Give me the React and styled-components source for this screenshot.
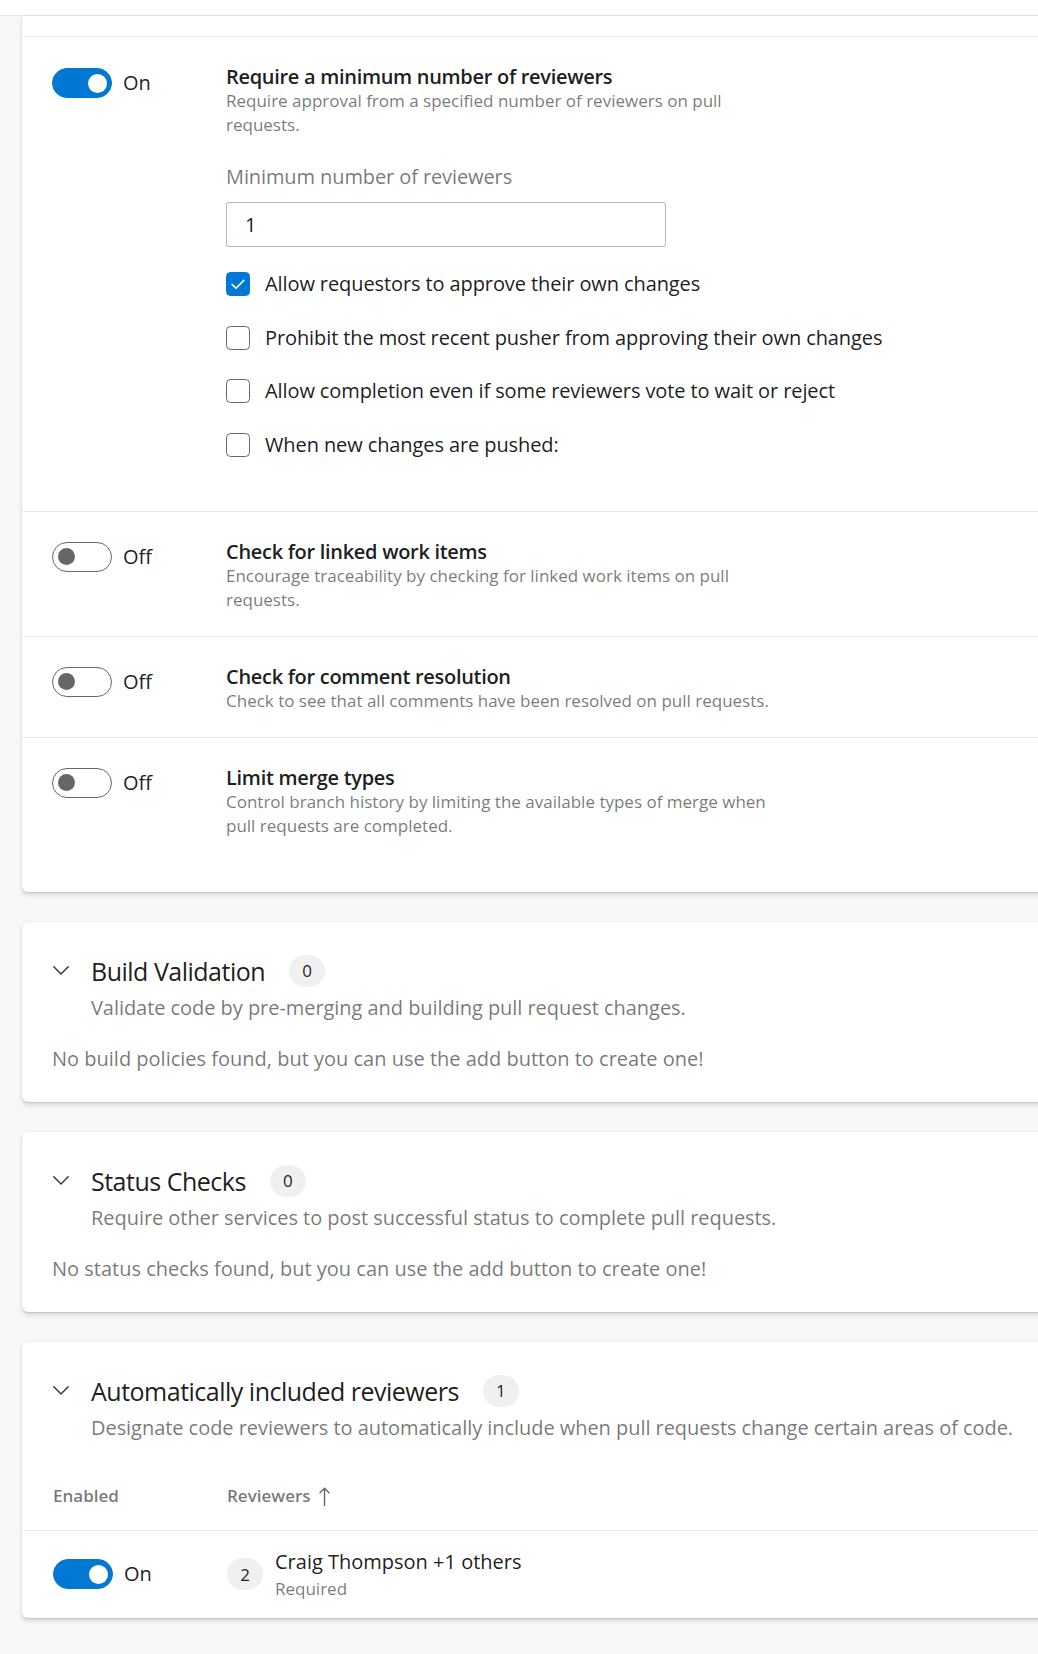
import React from "react";
import styled, { createGlobalStyle } from "styled-components";

const FONT = `"Open Sans", "Noto Sans", "Liberation Sans", sans-serif`;
const TEXT = "rgba(0, 0, 0, 0.9)";
const SUBTLE = "rgba(0, 0, 0, 0.55)";
const BLUE = "#0078d4";
const LINE = "#eaeaea";

const GlobalStyle = createGlobalStyle`
  html, body { margin: 0; padding: 0; }
  body {
    background: #f8f8f8;
    font-family: ${FONT};
    color: ${TEXT};
    overflow: hidden;
  }
  * { box-sizing: border-box; }
`;

const Page = styled.div`
  width: 1038px;
  height: 1654px;
  overflow: hidden;
`;

const TopBar = styled.header`
  height: 16px;
  background: #fff;
  border-bottom: 1px solid ${LINE};
`;

const Stack = styled.main`
  display: flex;
  flex-direction: column;
  gap: 30px;
  padding-left: 22px;
  width: 1100px;
`;

const Card = styled.section`
  background: #fff;
  border-radius: ${(p) => (p.$flushTop ? "0 0 6px 6px" : "6px")};
  box-shadow: 0 2.4px 5.4px rgba(0, 0, 0, 0.132), 0 0.45px 1.35px rgba(0, 0, 0, 0.108);
  padding: ${(p) => p.$pad || "0"};
`;

const CardLead = styled.div`
  height: 21px;
  border-bottom: 1px solid ${LINE};
`;

const PolicyRow = styled.div`
  display: grid;
  grid-template-columns: 174px 1fr;
  padding: 27px 0 24px 30px;
  border-bottom: ${(p) => (p.$last ? "none" : `1px solid ${LINE}`)};
`;

const ToggleField = styled.div`
  display: flex;
  align-items: center;
  gap: 11px;
  margin-top: ${(p) => p.$offset || 0}px;
  align-self: ${(p) => (p.$center ? "center" : "start")};
`;

const Track = styled.span`
  width: 60px;
  height: 30px;
  border-radius: 15px;
  display: flex;
  align-items: center;
  justify-content: ${(p) => (p.$on ? "flex-end" : "flex-start")};
  padding: 0 4.5px;
  border: 1.5px solid ${(p) => (p.$on ? BLUE : "#666666")};
  background: ${(p) => (p.$on ? BLUE : "#ffffff")};
  flex-shrink: 0;
`;

const Knob = styled.span`
  width: ${(p) => (p.$on ? 19 : 17)}px;
  height: ${(p) => (p.$on ? 19 : 17)}px;
  border-radius: 50%;
  background: ${(p) => (p.$on ? "#ffffff" : "#666666")};
`;

const ToggleText = styled.span`
  font-size: 20px;
  line-height: 30px;
  color: ${TEXT};
`;

const PolicyBody = styled.div`
  display: flex;
  flex-direction: column;
`;

const PolicyTitle = styled.div`
  font-size: 20px;
  line-height: 25px;
  font-weight: 600;
  letter-spacing: -0.3px;
  color: ${TEXT};
  white-space: nowrap;
`;

const PolicyDesc = styled.div`
  font-size: 17px;
  line-height: 24px;
  color: ${SUBTLE};
`;

const Line = styled.span`
  display: block;
  white-space: nowrap;
`;

const Settings = styled.div`
  display: flex;
  flex-direction: column;
  margin-top: 25px;
  margin-bottom: 27px;
`;

const FieldLabel = styled.label`
  font-size: 20px;
  line-height: 30px;
  letter-spacing: -0.1px;
  color: ${SUBTLE};
`;

const NumberInput = styled.input`
  margin-top: 10px;
  width: 440px;
  height: 45px;
  border: 1px solid rgba(0, 0, 0, 0.28);
  border-radius: 3px;
  padding: 0 18px;
  font-family: ${FONT};
  font-size: 20px;
  color: ${TEXT};
  background: #fff;
  outline: none;
`;

const OptionList = styled.div`
  display: flex;
  flex-direction: column;
  gap: 23.5px;
  margin-top: 22px;
`;

const OptionRow = styled.div`
  display: flex;
  align-items: center;
  gap: 15px;
  height: 30px;
`;

const Box = styled.span`
  width: 24px;
  height: 24px;
  border-radius: 4.5px;
  display: flex;
  align-items: center;
  justify-content: center;
  border: 1.5px solid ${(p) => (p.$checked ? BLUE : "#666666")};
  background: ${(p) => (p.$checked ? BLUE : "#ffffff")};
  flex-shrink: 0;
`;

const OptionText = styled.span`
  font-size: 20px;
  line-height: 30px;
  letter-spacing: -0.1px;
  color: ${TEXT};
  white-space: nowrap;
`;

const SectionHeader = styled.div`
  display: flex;
  align-items: center;
  height: 36px;
  padding-left: ${(p) => p.$inset || 0}px;
`;

const ChevronCell = styled.span`
  width: 39px;
  display: flex;
  align-items: center;
  padding-left: 1px;
`;

const SectionTitle = styled.h2`
  margin: 0;
  font-size: 25px;
  line-height: 36px;
  font-weight: 400;
  letter-spacing: -0.5px;
  color: ${TEXT};
  white-space: nowrap;
`;

const CountBadge = styled.span`
  margin-left: ${(p) => p.$gap ?? 24}px;
  min-width: 36px;
  height: 32px;
  padding: 0 12px;
  border-radius: 16px;
  background: rgba(0, 0, 0, 0.06);
  display: inline-flex;
  align-items: center;
  justify-content: center;
  font-size: 17px;
  color: ${TEXT};
  flex-shrink: 0;
`;

const SectionDesc = styled.p`
  margin: 4px 0 0;
  padding-left: ${(p) => 39 + (p.$inset || 0)}px;
  font-size: 20px;
  line-height: 30px;
  letter-spacing: -0.05px;
  color: ${SUBTLE};
  white-space: nowrap;
`;

const EmptyNote = styled.p`
  margin: 21px 0 0;
  font-size: 20px;
  line-height: 30px;
  color: ${SUBTLE};
  white-space: nowrap;
`;

const TableHead = styled.div`
  margin-top: 20px;
  height: 68px;
  display: grid;
  grid-template-columns: 174px 1fr;
  align-items: center;
  padding-left: 31px;
  border-bottom: 1px solid ${LINE};
`;

const ColumnLabel = styled.span`
  display: flex;
  align-items: center;
  gap: 8px;
  font-size: 17px;
  line-height: 24px;
  font-weight: 600;
  color: ${SUBTLE};
`;

const TableRow = styled.div`
  height: 87px;
  display: grid;
  grid-template-columns: 174px 1fr;
  align-items: center;
  padding-left: 31px;
`;

const ReviewerCell = styled.div`
  display: flex;
  align-items: center;
  gap: 12px;
`;

const ReviewerText = styled.div`
  display: flex;
  flex-direction: column;
`;

const ReviewerName = styled.span`
  font-size: 20px;
  line-height: 30px;
  color: ${TEXT};
  white-space: nowrap;
`;

const ReviewerMeta = styled.span`
  font-size: 17px;
  line-height: 24px;
  color: ${SUBTLE};
`;

const Toggle = ({ on, offset, center }) => (
  <ToggleField $offset={offset} $center={center}>
    <Track $on={on}>
      <Knob $on={on} />
    </Track>
    <ToggleText>{on ? "On" : "Off"}</ToggleText>
  </ToggleField>
);

const CheckIcon = () => (
  <svg width="14" height="11" viewBox="0 0 14 11" fill="none">
    <path d="M1.2 5.6 L5 9.3 L12.8 1.4" stroke="#fff" strokeWidth="1.6" strokeLinecap="round" strokeLinejoin="round" />
  </svg>
);

const Option = ({ checked, children }) => (
  <OptionRow>
    <Box $checked={checked}>{checked && <CheckIcon />}</Box>
    <OptionText>{children}</OptionText>
  </OptionRow>
);

const Chevron = () => (
  <svg width="16" height="9" viewBox="0 0 16 9" fill="none">
    <path d="M0.8 0.8 L8 8 L15.2 0.8" stroke="#333" strokeWidth="1.4" strokeLinecap="round" strokeLinejoin="round" />
  </svg>
);

const SortUp = () => (
  <svg width="11" height="19" viewBox="0 0 11 19" fill="none">
    <path d="M5.5 1.2 V18.5 M1 5.7 L5.5 1.2 L10 5.7" stroke="rgba(0,0,0,0.6)" strokeWidth="1.4" strokeLinecap="round" strokeLinejoin="round" />
  </svg>
);

const policies = [
  {
    on: false,
    title: "Check for linked work items",
    desc: ["Encourage traceability by checking for linked work items on pull", "requests."],
  },
  {
    on: false,
    title: "Check for comment resolution",
    desc: ["Check to see that all comments have been resolved on pull requests."],
  },
  {
    on: false,
    title: "Limit merge types",
    desc: ["Control branch history by limiting the available types of merge when", "pull requests are completed."],
  },
];

const options = [
  { checked: true, label: "Allow requestors to approve their own changes" },
  { checked: false, label: "Prohibit the most recent pusher from approving their own changes" },
  { checked: false, label: "Allow completion even if some reviewers vote to wait or reject" },
  { checked: false, label: "When new changes are pushed:" },
];

const SectionHead = ({ title, count, inset }) => (
  <SectionHeader $inset={inset}>
    <ChevronCell>
      <Chevron />
    </ChevronCell>
    <SectionTitle>{title}</SectionTitle>
    <CountBadge>{count}</CountBadge>
  </SectionHeader>
);

const Section = ({ title, count, desc, children }) => (
  <Card $pad="31px 0 28px 30px">
    <SectionHead title={title} count={count} />
    <SectionDesc>{desc}</SectionDesc>
    {children}
  </Card>
);

export default function App() {
  return (
    <Page>
      <GlobalStyle />
      <TopBar />
      <Stack>
        <Card $flushTop $pad="0 0 30px 0">
          <CardLead />
          <PolicyRow>
            <Toggle on offset={4} />
            <PolicyBody>
              <PolicyTitle>Require a minimum number of reviewers</PolicyTitle>
              <PolicyDesc>
                <Line>Require approval from a specified number of reviewers on pull</Line>
                <Line>requests.</Line>
              </PolicyDesc>
              <Settings>
                <FieldLabel htmlFor="min-reviewers">Minimum number of reviewers</FieldLabel>
                <NumberInput id="min-reviewers" value="1" readOnly />
                <OptionList>
                  {options.map((o) => (
                    <Option key={o.label} checked={o.checked}>
                      {o.label}
                    </Option>
                  ))}
                </OptionList>
              </Settings>
            </PolicyBody>
          </PolicyRow>
          {policies.map((p, i) => (
            <PolicyRow key={p.title} $last={i === policies.length - 1}>
              <Toggle on={p.on} offset={3} />
              <PolicyBody>
                <PolicyTitle>{p.title}</PolicyTitle>
                <PolicyDesc>
                  {p.desc.map((l) => (
                    <Line key={l}>{l}</Line>
                  ))}
                </PolicyDesc>
              </PolicyBody>
            </PolicyRow>
          ))}
        </Card>

        <Section
          title="Build Validation"
          count="0"
          desc="Validate code by pre-merging and building pull request changes."
        >
          <EmptyNote>No build policies found, but you can use the add button to create one!</EmptyNote>
        </Section>

        <Section
          title="Status Checks"
          count="0"
          desc="Require other services to post successful status to complete pull requests."
        >
          <EmptyNote>No status checks found, but you can use the add button to create one!</EmptyNote>
        </Section>

        <Card $pad="31px 0 0 0">
          <SectionHead title="Automatically included reviewers" count="1" inset={30} />
          <SectionDesc $inset={30}>
            Designate code reviewers to automatically include when pull requests change certain areas of code.
          </SectionDesc>
          <TableHead>
            <ColumnLabel>Enabled</ColumnLabel>
            <ColumnLabel>
              Reviewers
              <SortUp />
            </ColumnLabel>
          </TableHead>
          <TableRow>
            <Toggle on center />
            <ReviewerCell>
              <CountBadge $gap={0}>2</CountBadge>
              <ReviewerText>
                <ReviewerName>Craig Thompson +1 others</ReviewerName>
                <ReviewerMeta>Required</ReviewerMeta>
              </ReviewerText>
            </ReviewerCell>
          </TableRow>
        </Card>
      </Stack>
    </Page>
  );
}
